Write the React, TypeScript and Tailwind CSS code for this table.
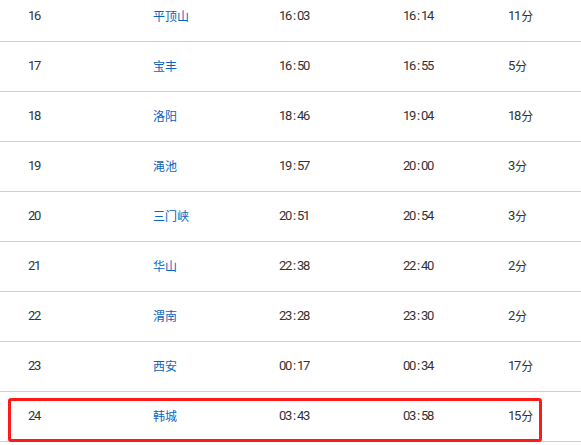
import React from 'react'

const rows = [
  ['16', '平顶山', '16:03', '16:14', '11分'],
  ['17', '宝丰', '16:50', '16:55', '5分'],
  ['18', '洛阳', '18:46', '19:04', '18分'],
  ['19', '渑池', '19:57', '20:00', '3分'],
  ['20', '三门峡', '20:51', '20:54', '3分'],
  ['21', '华山', '22:38', '22:40', '2分'],
  ['22', '渭南', '23:28', '23:30', '2分'],
  ['23', '西安', '00:17', '00:34', '17分'],
  ['24', '韩城', '03:43', '03:58', '15分'],
]

// tall, tightly set digits like the original bitmap font
const num = 'font-["Roboto",sans-serif] text-[13px] leading-[16px] tabular-nums tracking-[-1.2px]'
const cjk = 'font-["Noto_Sans_CJK_SC",sans-serif] text-[12px] leading-[16px]'

function Time({ t }: { t: string }) {
  const [h, m] = t.split(':')
  return (
    <span className={`flex items-center ${num}`}>
      <span className="w-[12px]">{h}</span>
      <span className="w-[6px] pl-[2px]">:</span>
      <span>{m}</span>
    </span>
  )
}

export default function App() {
  return (
    <div className="w-[581px] h-[445px] overflow-hidden bg-white text-[12px] text-[#333]">
      <div className="-mt-[8px]">
        {rows.map((r, i) => (
          <div
            key={r[0]}
            className="relative h-[50px] border-b border-[#d0d0d0] grid grid-cols-[153px_126px_124px_105px_1fr] items-center pb-[2px]"
          >
            <span className={`pl-[28px] ${num}`}>{r[0]}</span>
            <span className={`text-[#0a64c0] ${cjk}`}>{r[1]}</span>
            <Time t={r[2]} />
            <Time t={r[3]} />
            <span className="flex items-center">
              <span className={num}>{r[4].replace('分', '')}</span>
              <span className={`${cjk} ml-[1px]`}>分</span>
            </span>
            {i === rows.length - 1 && (
              <div className="absolute left-[8px] top-[6px] w-[534px] h-[44px] border-[3px] border-[#ff1a1a] rounded-[3px] pointer-events-none" />
            )}
          </div>
        ))}
      </div>
    </div>
  )
}
